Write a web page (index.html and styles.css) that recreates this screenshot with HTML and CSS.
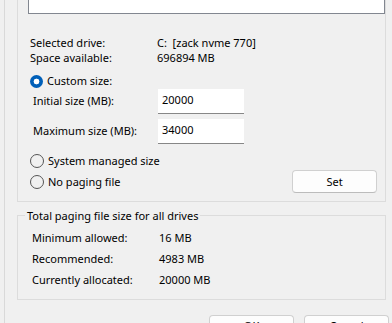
FILE: index.html
```html
<!DOCTYPE html>
<html lang="en">
  <head>
    <meta charset="UTF-8" />
    <title>Virtual Memory</title>
    <link rel="stylesheet" href="styles.css">
  </head>
  <body>
    <div class="sheet">
      <div class="group group-top">
        <div class="drive-list"></div>
        <div class="info">
          <span>Selected drive:</span>
          <span>C:&nbsp; [zack nvme 770]</span>
          <span>Space available:</span>
          <span>696894 MB</span>
        </div>
        <label class="radio">
          <span class="dot checked"></span>
          Custom size:
        </label>
        <div class="sizes">
          <span>Initial size (MB):</span>
          <input type="text" value="20000" />
          <span>Maximum size (MB):</span>
          <input type="text" value="34000" />
        </div>
        <label class="radio radio-system">
          <span class="dot"></span>
          System managed size
        </label>
        <div class="set-row">
          <label class="radio">
            <span class="dot"></span>
            No paging file
          </label>
          <button class="btn">Set</button>
        </div>
      </div>

      <fieldset class="group group-total">
        <legend>Total paging file size for all drives</legend>
        <div class="totals">
          <span>Minimum allowed:</span>
          <span>16 MB</span>
          <span>Recommended:</span>
          <span>4983 MB</span>
          <span>Currently allocated:</span>
          <span>20000 MB</span>
        </div>
      </fieldset>
    </div>

    <div class="actions">
      <button class="btn">OK</button>
      <button class="btn">Cancel</button>
    </div>
  </body>
</html>
```

FILE: styles.css
```css
html,
body {
  margin: 0;
  padding: 0;
  background-color: #f0f0f0;
}
body {
  font-family: "Noto Sans", "Segoe UI", sans-serif;
  font-size: 11px;
  color: #000;
  height: 323px;
  overflow: hidden;
  position: relative;
}
.sheet {
  margin-left: 4px;
  border-left: 1px solid #d9d9d9;
  min-height: 323px;
  padding-left: 12px;
}
.group {
  width: 369px;
  box-sizing: border-box;
  border: 1px solid #dcdcdc;
}
.group-top {
  border-top: none;
  padding: 0 8px 8px 0;
}
.drive-list {
  height: 13px;
  margin-left: 10px;
  margin-right: -8px;
  background: #fff;
  border: 1px solid #828790;
  border-top: none;
}
.info {
  display: grid;
  grid-template-columns: 127px auto;
  line-height: 15px;
  margin: 21px 0 0 12px;
}
.radio {
  display: flex;
  align-items: center;
  gap: 4px;
  height: 16px;
  margin-left: 12px;
  line-height: 16px;
}
.info + .radio {
  margin-top: 8px;
}
.dot {
  width: 12px;
  height: 12px;
  border: 1px solid #555;
  border-radius: 50%;
  box-sizing: content-box;
  flex: none;
}
.dot.checked {
  width: 13px;
  height: 13px;
  border: none;
  background: radial-gradient(circle, #fff 0 2.6px, #005fb8 3.2px);
}
.sizes {
  display: grid;
  grid-template-columns: 125px 86px;
  row-gap: 5px;
  align-items: center;
  margin: 0 0 0 15px;
}
.sizes span {
  padding-bottom: 2px;
}
.sizes input {
  height: 25px;
  box-sizing: border-box;
  border: none;
  border-bottom: 1px solid #878787;
  background: #fff;
  padding: 0 4px 3px;
  font: inherit;
  color: #000;
  outline: none;
}
.radio-system {
  margin-top: 9px;
}
.set-row {
  display: flex;
  justify-content: space-between;
  align-items: center;
  margin-top: 1px;
}
.btn {
  width: 85px;
  height: 23px;
  box-sizing: border-box;
  background: #fdfdfd;
  border: 1px solid #d0d0d0;
  border-bottom-color: #bcbcbc;
  border-radius: 4px;
  font: inherit;
  color: #000;
  padding: 0;
}
.group-total {
  margin: 6px 0 0 0;
  padding: 0 0 9px 0;
  min-width: 0;
}
.group-total legend {
  margin-left: 7px;
  padding: 0 2px;
  line-height: 15px;
}
.totals {
  display: grid;
  grid-template-columns: 127px auto;
  line-height: 21px;
  margin: 4px 0 0 14px;
}
.actions {
  position: absolute;
  top: 315px;
  right: 3px;
  display: flex;
  gap: 10px;
}
.actions .btn {
  padding-bottom: 3px;
}
```
